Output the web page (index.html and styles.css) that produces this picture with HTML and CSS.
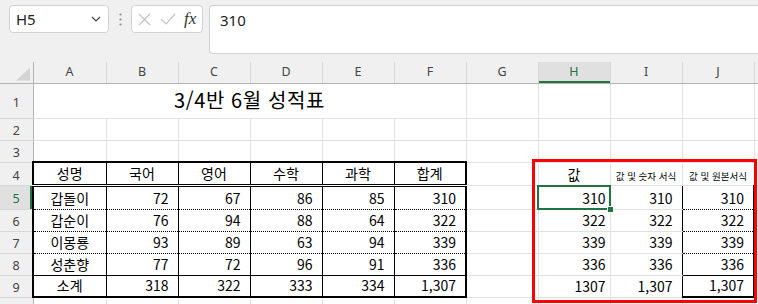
FILE: index.html
```html
<!DOCTYPE html>
<html lang="ko">
<head>
<meta charset="utf-8">
<title>성적표</title>
<link rel="stylesheet" href="styles.css">
</head>
<body>
<div class="app">
  <div class="fbar">
    <div class="namebox">
      <span class="ref">H5</span>
      <svg class="chev" width="10" height="6" viewBox="0 0 10 6"><path d="M1 1l4 4 4-4" fill="none" stroke="#444" stroke-width="1.2"/></svg>
    </div>
    <div class="grip">
      <svg width="3" height="13" viewBox="0 0 3 13"><circle cx="1.5" cy="1.5" r="1.1" fill="#8c8c8c"/><circle cx="1.5" cy="6.5" r="1.1" fill="#8c8c8c"/><circle cx="1.5" cy="11.5" r="1.1" fill="#8c8c8c"/></svg>
    </div>
    <div class="fxbox">
      <svg class="ico" width="13" height="13" viewBox="0 0 13 13"><path d="M1 1l11 11M12 1L1 12" fill="none" stroke="#c3c3c3" stroke-width="1.2"/></svg>
      <svg class="ico ok" width="16" height="12" viewBox="0 0 16 12"><path d="M1 6l5 5L15 1" fill="none" stroke="#c3c3c3" stroke-width="1.2"/></svg>
      <span class="fx">fx</span>
    </div>
    <div class="finput">310</div>
  </div>
  <div class="sheet">
    <table class="grid">
      <colgroup>
        <col class="w-rh"><col class="w-a"><col class="w-n"><col class="w-n"><col class="w-n"><col class="w-n"><col class="w-n"><col class="w-n"><col class="w-n"><col class="w-n"><col class="w-n"><col class="w-k">
      </colgroup>
      <thead>
        <tr class="rh-row">
          <th class="corner"><span class="tri"></span></th>
          <th class="ch">A</th><th class="ch">B</th><th class="ch">C</th><th class="ch">D</th><th class="ch">E</th><th class="ch">F</th><th class="ch">G</th><th class="ch on">H</th><th class="ch">I</th><th class="ch">J</th><th class="ch"></th>
        </tr>
      </thead>
      <tbody>
        <tr class="rw1">
          <th class="rh">1</th>
          <td colspan="6" class="title">3/4반 6월 성적표</td><td></td><td></td><td></td><td></td><td></td>
        </tr>
        <tr class="rw2">
          <th class="rh">2</th><td></td><td></td><td></td><td></td><td></td><td></td><td></td><td></td><td></td><td></td><td></td>
        </tr>
        <tr class="rw3">
          <th class="rh">3</th><td></td><td></td><td></td><td></td><td></td><td></td><td></td><td></td><td></td><td></td><td></td>
        </tr>
        <tr class="rw4">
          <th class="rh">4</th>
          <td class="tb ca ctr">성명</td><td class="tb ctr">국어</td><td class="tb ctr">영어</td><td class="tb ctr">수학</td><td class="tb ctr">과학</td><td class="tb cf ctr">합계</td>
          <td></td><td class="ctr">값</td><td class="ctr small">값 및 숫자 서식</td><td class="ctr small">값 및 원본서식</td><td></td>
        </tr>
        <tr class="rw5">
          <th class="rh on">5</th>
          <td class="tb ca ctr">갑돌이</td><td class="tb num">72</td><td class="tb num">67</td><td class="tb num">86</td><td class="tb num">85</td><td class="tb cf num">310</td>
          <td></td><td class="gen sel">310</td><td class="ib num">310</td><td class="jb num">310</td><td></td>
        </tr>
        <tr class="rw6">
          <th class="rh">6</th>
          <td class="tb ca ctr">갑순이</td><td class="tb num">76</td><td class="tb num">94</td><td class="tb num">88</td><td class="tb num">64</td><td class="tb cf num">322</td>
          <td></td><td class="gen">322</td><td class="ib num">322</td><td class="jb num">322</td><td></td>
        </tr>
        <tr class="rw7">
          <th class="rh">7</th>
          <td class="tb ca ctr">이몽룡</td><td class="tb num">93</td><td class="tb num">89</td><td class="tb num">63</td><td class="tb num">94</td><td class="tb cf num">339</td>
          <td></td><td class="gen">339</td><td class="ib num">339</td><td class="jb num">339</td><td></td>
        </tr>
        <tr class="rw8">
          <th class="rh">8</th>
          <td class="tb ca ctr">성춘향</td><td class="tb num">77</td><td class="tb num">72</td><td class="tb num">96</td><td class="tb num">91</td><td class="tb cf num">336</td>
          <td></td><td class="gen">336</td><td class="ib num">336</td><td class="jb num">336</td><td></td>
        </tr>
        <tr class="rw9">
          <th class="rh">9</th>
          <td class="tb ca ctr">소계</td><td class="tb num">318</td><td class="tb num">322</td><td class="tb num">333</td><td class="tb num">334</td><td class="tb cf num">1,307</td>
          <td></td><td class="gen">1307</td><td class="ib num">1,307</td><td class="jb num">1,307</td><td></td>
        </tr>
        <tr class="rw10">
          <th class="rh"></th><td></td><td></td><td></td><td></td><td></td><td></td><td></td><td></td><td></td><td></td><td></td>
        </tr>
      </tbody>
    </table>
    <div class="redbox"></div>
  </div>
</div>
</body>
</html>
```
FILE: styles.css
```css
html, body {
  margin: 0;
  padding: 0;
}
body {
  width: 758px;
  height: 304px;
  overflow: hidden;
  background: #f0f0f0;
  font-family: "Noto Sans CJK KR", "Noto Sans", sans-serif;
}
.app {
  width: 758px;
  height: 304px;
  overflow: hidden;
}

/* formula bar */
.fbar {
  display: flex;
  align-items: flex-start;
  height: 62px;
  box-sizing: border-box;
  padding: 5px 0 0 9px;
}
.namebox {
  width: 100px;
  height: 28px;
  box-sizing: border-box;
  border: 1px solid #d2d2d2;
  border-radius: 4px;
  background: #fff;
  display: flex;
  align-items: center;
  justify-content: space-between;
  padding: 0 7px 0 6px;
  font-family: "Noto Sans", sans-serif;
  font-size: 15px;
  color: #222;
}
.chev {
  display: block;
}
.grip {
  width: 22px;
  height: 28px;
  display: flex;
  align-items: center;
  justify-content: center;
}
.grip svg {
  display: block;
}
.fxbox {
  width: 72px;
  height: 28px;
  box-sizing: border-box;
  border: 1px solid #d2d2d2;
  border-radius: 4px;
  background: #fff;
  display: flex;
  align-items: center;
  padding: 0 0 0 6px;
  margin-right: 6px;
}
.ico {
  display: block;
}
.ok {
  margin-left: 9px;
}
.fx {
  margin-left: 8px;
  font-family: "Liberation Serif", "DejaVu Serif", serif;
  font-style: italic;
  font-size: 17px;
  color: #333;
  line-height: 20px;
}
.finput {
  flex: 1;
  height: 49px;
  box-sizing: border-box;
  border: 1px solid #d2d2d2;
  border-right: 0;
  border-radius: 4px 0 0 4px;
  background: #fff;
  padding: 4px 0 0 10px;
  font-family: "Noto Sans", sans-serif;
  font-size: 15px;
  line-height: 20px;
  color: #222;
}

/* sheet */
.sheet {
  position: relative;
  height: 242px;
  overflow: hidden;
  background: #fff;
}
.grid {
  border-collapse: collapse;
  table-layout: fixed;
  width: 794px;
}
.w-rh { width: 33px; }
.w-a { width: 73px; }
.w-n { width: 72px; }
.w-k { width: 40px; }

th {
  padding: 0;
  font-weight: normal;
  background: #f0f0f0;
  font-family: "Noto Sans", sans-serif;
  font-size: 12.5px;
  color: #444;
}
.rh-row { height: 21px; }
.ch {
  border-left: 1px solid #d8d8d8;
  border-right: 1px solid #d8d8d8;
  border-bottom: 1px solid #b4b4b4;
  border-top: 0;
  padding-bottom: 2px;
  vertical-align: middle;
}
.ch.on {
  background: #e0e0e0;
  color: #217346;
  box-shadow: inset 0 -2px 0 #217346;
}
.corner {
  border-right: 1px solid #b4b4b4;
  border-bottom: 1px solid #b4b4b4;
  border-top: 0;
  vertical-align: bottom;
}
.tri {
  display: block;
  width: 14px;
  height: 13px;
  margin: 0 0 2px 16px;
  background: #d4d4d4;
  clip-path: polygon(100% 0, 100% 100%, 0 100%);
}
.rh {
  border-right: 1px solid #b4b4b4;
  border-bottom: 1px solid #d8d8d8;
  vertical-align: middle;
  padding-top: 4px;
  line-height: 14px;
}
.rh.on {
  background: #e0e0e0;
  color: #217346;
  box-shadow: inset -2px 0 0 #217346;
}

td {
  border: 1px solid #e1e1e1;
  padding: 0 3px 2px 3px;
  vertical-align: bottom;
  font-size: 14px;
  line-height: 18px;
  color: #000;
  white-space: nowrap;
  overflow: visible;
}
.rw1 { height: 35px; }
.rw2, .rw3 { height: 22px; }
.rw4 { height: 23px; }
.rw5 { height: 24px; }
.rw6, .rw7, .rw8, .rw9, .rw10 { height: 22px; }

.title {
  text-align: center;
  font-size: 20px;
  line-height: 24px;
  letter-spacing: 0.6px;
  padding-bottom: 6px;
}
.ctr { text-align: center; }
.num { text-align: right; padding-right: 9px; }
.gen { text-align: right; padding-right: 4px; }
.small {
  font-size: 9.5px;
  line-height: 12px;
  padding: 0 0 3px 0;
}

/* scorecard borders */
.tb {
  border-left: 1px solid #000;
  border-right: 1px solid #000;
}
.ca { border-left: 2px solid #000; }
.cf { border-right: 2px solid #000; }
.ib { border-right: 1px solid #000; }
.jb {
  border-left: 1px solid #000;
  border-right: 2px solid #000;
}
.rw4 .tb { border-top: 2px solid #000; border-bottom: 3px double #000; }
.rw5 .tb { border-top: 3px double #000; border-bottom: 1px dotted #000; }
.rw5 .jb { border-bottom: 1px dotted #000; }
.rw6 .tb, .rw7 .tb,
.rw6 .jb, .rw7 .jb { border-top: 1px dotted #000; border-bottom: 1px dotted #000; }
.rw8 .tb, .rw8 .jb { border-top: 1px dotted #000; border-bottom: 1px solid #000; }
.rw9 .tb, .rw9 .jb { border-top: 1px solid #000; border-bottom: 2px solid #000; }

/* active cell */
.sel { position: relative; }
.sel::after {
  content: "";
  position: absolute;
  left: -2px;
  top: -1px;
  right: -1px;
  bottom: -1px;
  border: 2px solid #217346;
}
.sel::before {
  content: "";
  position: absolute;
  right: -4px;
  bottom: -4px;
  width: 5px;
  height: 5px;
  background: #217346;
  border: 1px solid #fff;
  z-index: 2;
}

/* annotation */
.redbox {
  position: absolute;
  left: 532px;
  top: 97px;
  width: 219px;
  height: 138px;
  border: 3px solid #f00;
  pointer-events: none;
}
```
